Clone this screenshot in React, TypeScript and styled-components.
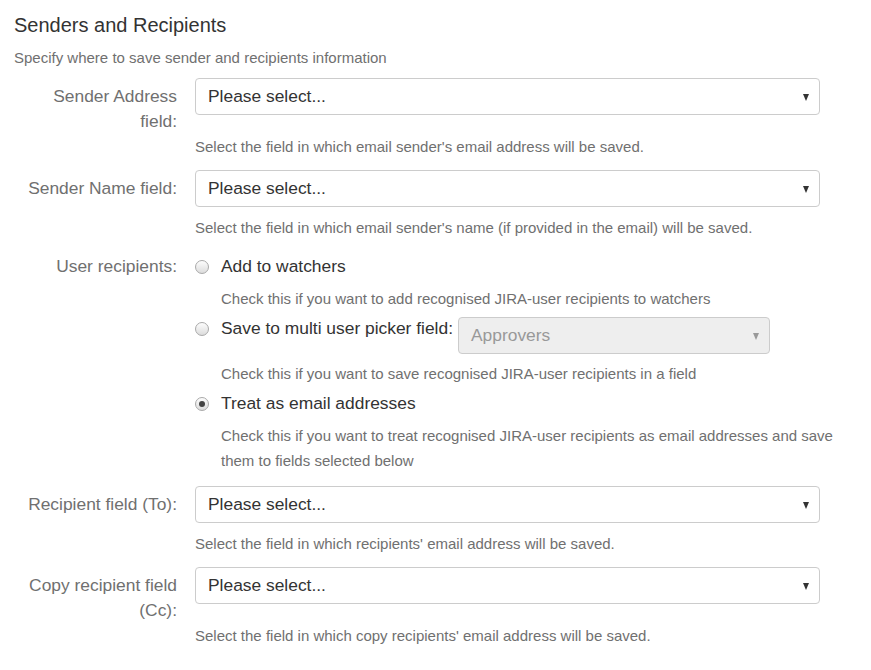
import styled, { createGlobalStyle } from "styled-components";

const GlobalStyle = createGlobalStyle`
    body {
        margin: 0;
        background: #fff;
        font-family: "Liberation Sans", Arial, sans-serif;
    }
`;

type Option = {
    label: string;
    help: string;
    checked?: boolean;
    picker?: string;
};

const userOptions: Option[] = [
    {
        label: 'Add to watchers',
        help: 'Check this if you want to add recognised JIRA-user recipients to watchers',
    },
    {
        label: 'Save to multi user picker field:',
        help: 'Check this if you want to save recognised JIRA-user recipients in a field',
        picker: 'Approvers',
    },
    {
        label: 'Treat as email addresses',
        help: 'Check this if you want to treat recognised JIRA-user recipients as email addresses and save them to fields selected below',
        checked: true,
    },
];

function Select({ value, disabled }: { value: string; disabled?: boolean }) {
    return (
        <SelectBox $disabled={disabled}>
            <span>{value}</span>
            <Arrow $disabled={disabled} />
        </SelectBox>
    )
}

function SelectRow({ label, help }: { label: string; help: string }) {
    return (
        <Row>
            <Label>{label}</Label>
            <FieldCell>
                <Select value="Please select..." />
            </FieldCell>
            <Help>{help}</Help>
        </Row>
    )
}

export default function App() {
    return (
        <Page>
            <GlobalStyle />
            <Title>Senders and Recipients</Title>
            <Intro>Specify where to save sender and recipients information</Intro>
            <Form>
                <SelectRow
                    label="Sender Address field:"
                    help="Select the field in which email sender's email address will be saved."
                />
                <SelectRow
                    label="Sender Name field:"
                    help="Select the field in which email sender's name (if provided in the email) will be saved."
                />
                <Row>
                    <Label $top={3}>User recipients:</Label>
                    <RadioGroup>
                        {userOptions.map((opt) => (
                            <RadioItem key={opt.label}>
                                <RadioLine>
                                    <Radio $checked={opt.checked} />
                                    <RadioText>{opt.label}</RadioText>
                                    {opt.picker && (
                                        <Picker>
                                            <Select value={opt.picker} disabled />
                                        </Picker>
                                    )}
                                </RadioLine>
                                <RadioHelp>{opt.help}</RadioHelp>
                            </RadioItem>
                        ))}
                    </RadioGroup>
                </Row>
                <SelectRow
                    label="Recipient field (To):"
                    help="Select the field in which recipients' email address will be saved."
                />
                <SelectRow
                    label="Copy recipient field (Cc):"
                    help="Select the field in which copy recipients' email address will be saved."
                />
            </Form>
        </Page>
    )
}


const Page = styled.div`
    padding: 12px 0 0 14px;
    width: 845px;
    color: #333;
`;

const Title = styled.h2`
    margin: 0;
    font-size: 20px;
    font-weight: normal;
    line-height: 26px;
    color: #333;
`;

const Intro = styled.p`
    margin: 11px 0 11px;
    font-size: 15px;
    line-height: 18px;
    color: #707070;
`;

const Form = styled.div`
    padding-left: 1px;
`;

const Row = styled.div`
    display: grid;
    grid-template-columns: 162px 625px;
    column-gap: 18px;
    margin-bottom: 11px;
`;

const Label = styled.div<{ $top?: number }>`
    grid-row: 1 / 2;
    padding-top: ${(p) => p.$top ?? 6}px;
    text-align: right;
    font-size: 17.4px;
    line-height: 25px;
    color: #707070;
`;

const FieldCell = styled.div`
    padding-bottom: 8px;
`;

const Help = styled.div`
    grid-column: 2;
    font-size: 15px;
    line-height: 25px;
    color: #707070;
    white-space: nowrap;
`;

const SelectBox = styled.div<{ $disabled?: boolean }>`
    display: flex;
    align-items: center;
    justify-content: space-between;
    box-sizing: border-box;
    height: 37px;
    padding: 0 10px 0 12px;
    border: 1px solid #ccc;
    border-radius: 4px;
    background: ${(p) => (p.$disabled ? '#eeeeee' : '#fff')};
    color: ${(p) => (p.$disabled ? '#999' : '#333')};
    font-size: 17.4px;
`;

const Arrow = styled.span<{ $disabled?: boolean }>`
    width: 0;
    height: 0;
    border-left: 3.5px solid transparent;
    border-right: 3.5px solid transparent;
    border-top: 7px solid ${(p) => (p.$disabled ? '#999' : '#333')};
    margin-top: 1px;
`;

const RadioGroup = styled.div`
    padding: 3px 0 2px;
`;

const RadioItem = styled.div`
    margin-bottom: 5px;

    &:last-child {
        margin-bottom: 0;
    }
`;

const RadioLine = styled.div`
    display: flex;
    align-items: flex-start;
`;

const Radio = styled.span<{ $checked?: boolean }>`
    position: relative;
    box-sizing: border-box;
    flex: none;
    width: 14px;
    height: 14px;
    margin: 6px 12px 0 0;
    border: 1px solid #a9a9a9;
    border-radius: 50%;
    background: linear-gradient(#fdfdfd, #dcdcdc);

    &::after {
        content: '';
        display: ${(p) => (p.$checked ? 'block' : 'none')};
        position: absolute;
        left: 3px;
        top: 3px;
        width: 6px;
        height: 6px;
        border-radius: 50%;
        background: #444;
    }
`;

const RadioText = styled.span`
    font-size: 17.4px;
    line-height: 25px;
    color: #333;
`;

const Picker = styled.div`
    width: 312px;
    margin: 1px 0 0 5px;
`;

const RadioHelp = styled.div`
    margin: 7px 0 0 26px;
    width: 615px;
    font-size: 15px;
    line-height: 25px;
    color: #707070;
`;
